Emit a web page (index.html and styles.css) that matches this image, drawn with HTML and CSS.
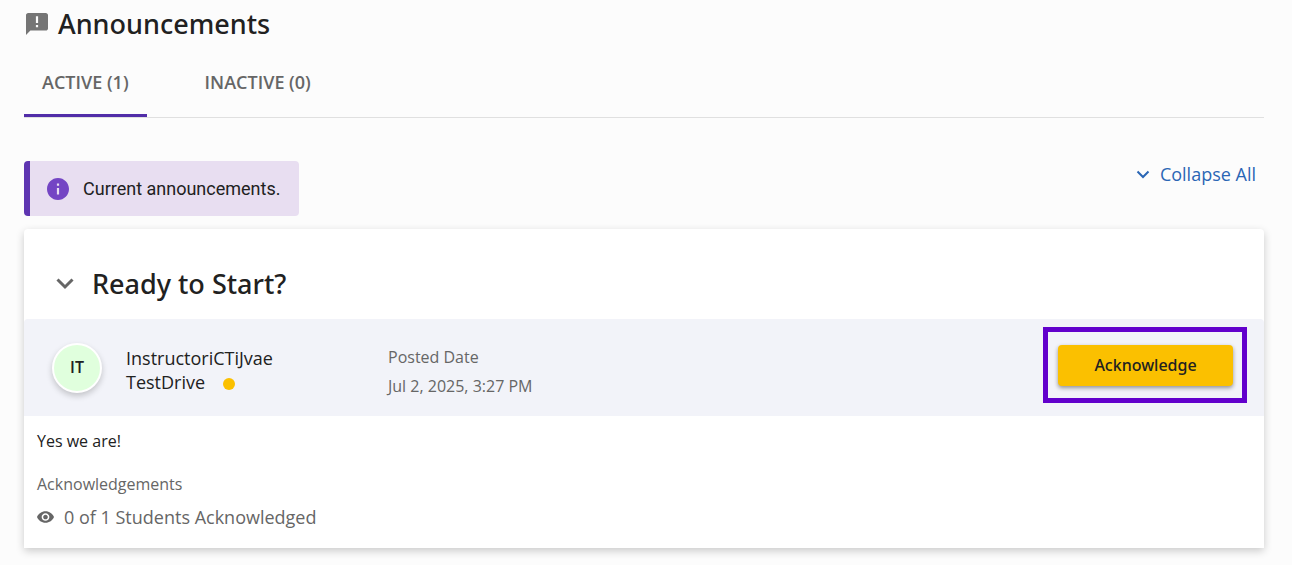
FILE: index.html
```html
<!DOCTYPE html>
<html lang="en">
  <head>
    <meta charset="UTF-8" />
    <meta name="viewport" content="width=device-width, initial-scale=1.0" />
    <title>Announcements</title>
    <link rel="stylesheet" href="styles.css">
  </head>
  <body>
    <main class="page">
      <header class="page-header">
        <svg class="header-icon" viewBox="2 2 20 20" aria-hidden="true">
          <path d="M20 2H4c-1.100 0-1.990.9-1.990 2L2 22l4-4h14c1.100 0 2-.9 2-2V4c0-1.100-.9-2-2-2zm-7 13h-2v-2h2v2zm0-4h-2V5h2v6z" />
        </svg>
        <h1>Announcements</h1>
      </header>

      <div class="tabs" role="tablist">
        <button class="tab active" role="tab" aria-selected="true">ACTIVE (1)</button>
        <button class="tab" role="tab" aria-selected="false">INACTIVE (0)</button>
      </div>

      <div class="toolbar">
        <div class="notice">
          <svg class="notice-icon" viewBox="2 2 20 20" aria-hidden="true">
            <path d="M12 2C6.480 2 2 6.480 2 12s4.480 10 10 10 10-4.480 10-10S17.520 2 12 2zm1 15h-2v-6h2v6zm0-8h-2V7h2v2z" />
          </svg>
          <span>Current announcements.</span>
        </div>
        <button class="collapse-all">
          <svg class="collapse-icon" viewBox="0 0 14 9" aria-hidden="true">
            <path d="M1.500 1.500L7 7l5.500-5.500" />
          </svg>
          Collapse All
        </button>
      </div>

      <article class="card">
        <div class="card-header">
          <button class="toggle" aria-label="Collapse announcement" aria-expanded="true">
            <svg viewBox="0 0 18 12" aria-hidden="true">
              <path d="M1.500 1.500L9 9l7.500-7.500" />
            </svg>
          </button>
          <h2>Ready to Start?</h2>
        </div>

        <div class="card-meta">
          <div class="avatar">IT</div>
          <div class="author">
            InstructoriCTiJvae TestDrive<span class="status-dot"></span>
          </div>
          <div class="posted">
            <div>Posted Date</div>
            <div>Jul 2, 2025, 3:27 PM</div>
          </div>
          <div class="highlight">
            <button class="acknowledge">Acknowledge</button>
          </div>
        </div>

        <div class="card-body">
          <p class="message">Yes we are!</p>
          <div class="ack-label">Acknowledgements</div>
          <div class="ack-count">
            <svg class="eye-icon" viewBox="1 4.500 22 15" aria-hidden="true">
              <path d="M12 4.500C7 4.500 2.730 7.610 1 12c1.730 4.390 6 7.500 11 7.500s9.270-3.110 11-7.500c-1.730-4.390-6-7.500-11-7.500zM12 17c-2.760 0-5-2.240-5-5s2.240-5 5-5 5 2.240 5 5-2.240 5-5 5zm0-8c-1.660 0-3 1.340-3 3s1.340 3 3 3 3-1.340 3-3-1.340-3-3-3z" />
            </svg>
            0 of 1 Students Acknowledged
          </div>
        </div>
      </article>
    </main>
  </body>
</html>
```

FILE: styles.css
```css
* {
  box-sizing: border-box;
}
body {
  margin: 0;
  background-color: #fcfcfc;
  color: #212121;
  font-family: "Open Sans", sans-serif;
}
button {
  border: none;
  background: none;
  padding: 0;
  font-family: inherit;
  cursor: pointer;
}
svg {
  display: block;
}
.page {
  padding: 6px 28px 16px 24px;
}
.page-header {
  display: flex;
  align-items: center;
  gap: 10px;
}
.page-header h1,
.card-header h2 {
  margin: 0;
  font-family: "Noto Sans", sans-serif;
  font-size: 27px;
  font-weight: 500;
  line-height: 36px;
}
.header-icon {
  width: 22px;
  height: 22px;
  margin-left: 2px;
  fill: #757575;
}
.tabs {
  display: flex;
  gap: 40px;
  margin-top: 8px;
  border-bottom: 1px solid #e0e0e0;
}
.tab {
  height: 67px;
  padding: 0 18px;
  border-bottom: 3px solid transparent;
  color: #666;
  font-size: 18px;
  font-weight: 600;
}
.tab.active {
  border-bottom-color: #512da8;
}
.toolbar {
  display: flex;
  justify-content: space-between;
  align-items: flex-start;
  margin-top: 43px;
}
.notice {
  display: flex;
  align-items: center;
  gap: 14px;
  padding: 16px 19px 15px 17px;
  border-left: 6px solid #5e35b1;
  border-radius: 4px;
  background-color: #e8def1;
  font-family: Roboto, sans-serif;
  font-size: 18px;
  line-height: 24px;
}
.notice-icon {
  width: 22px;
  height: 22px;
  fill: #7445c4;
}
.collapse-all {
  display: flex;
  align-items: center;
  gap: 10px;
  padding: 0 8px 0 0;
  color: #2a66b5;
  font-size: 18px;
  line-height: 27px;
}
.collapse-icon {
  width: 14px;
  height: 9px;
  fill: none;
  stroke: #2a66b5;
  stroke-width: 2;
}
.card {
  margin-top: 13px;
  border-radius: 4px 4px 0 0;
  background-color: white;
  box-shadow: 0 3px 8px rgba(0, 0, 0, 0.2);
}
.card-header {
  display: flex;
  align-items: center;
  gap: 18px;
  padding: 37px 32px 17px;
}
.toggle svg {
  width: 18px;
  height: 12px;
  fill: none;
  stroke: #666;
  stroke-width: 3;
}
.card-meta {
  display: flex;
  align-items: flex-start;
  padding: 8px 17px 13px 28px;
  border-radius: 4px 4px 0 0;
  background-color: #f2f3f9;
}
.avatar {
  width: 50px;
  height: 50px;
  margin-top: 16px;
  border: 2px solid white;
  border-radius: 50%;
  background-color: #e0ffdd;
  box-shadow: 0 3px 6px rgba(0, 0, 0, 0.2);
  font-size: 16px;
  font-weight: 600;
  line-height: 45px;
  text-align: center;
}
.author {
  width: 262px;
  margin-top: 19px;
  padding: 0 88px 0 24px;
  font-size: 18px;
  line-height: 24px;
}
.status-dot {
  display: inline-block;
  width: 12px;
  height: 12px;
  margin-left: 18px;
  border-radius: 50%;
  background-color: #fbc000;
  vertical-align: -1px;
}
.posted {
  margin-top: 16px;
  margin-left: 24px;
  color: #666;
  font-size: 16px;
  line-height: 29px;
}
.highlight {
  margin-left: auto;
  padding: 13px 9px 12px 10px;
  border: 5px solid #6200cc;
}
.acknowledge {
  display: block;
  width: 175px;
  height: 41px;
  padding-bottom: 2px;
  border-radius: 4px;
  background-color: #fbc000;
  box-shadow: 0 2px 4px rgba(0, 0, 0, 0.4);
  color: #212121;
  font-family: "Noto Sans", sans-serif;
  font-size: 16px;
  font-weight: 500;
}
.card-body {
  padding: 13px 13px 18px;
  color: #666;
}
.message {
  margin: 0;
  color: #212121;
  font-size: 16px;
  line-height: 24px;
}
.ack-label {
  margin-top: 19px;
  font-size: 16px;
  line-height: 24px;
}
.ack-count {
  display: flex;
  align-items: center;
  gap: 10px;
  margin-top: 8px;
  font-size: 18px;
  line-height: 26px;
}
.eye-icon {
  width: 17px;
  height: 12px;
  fill: #666;
}
```
